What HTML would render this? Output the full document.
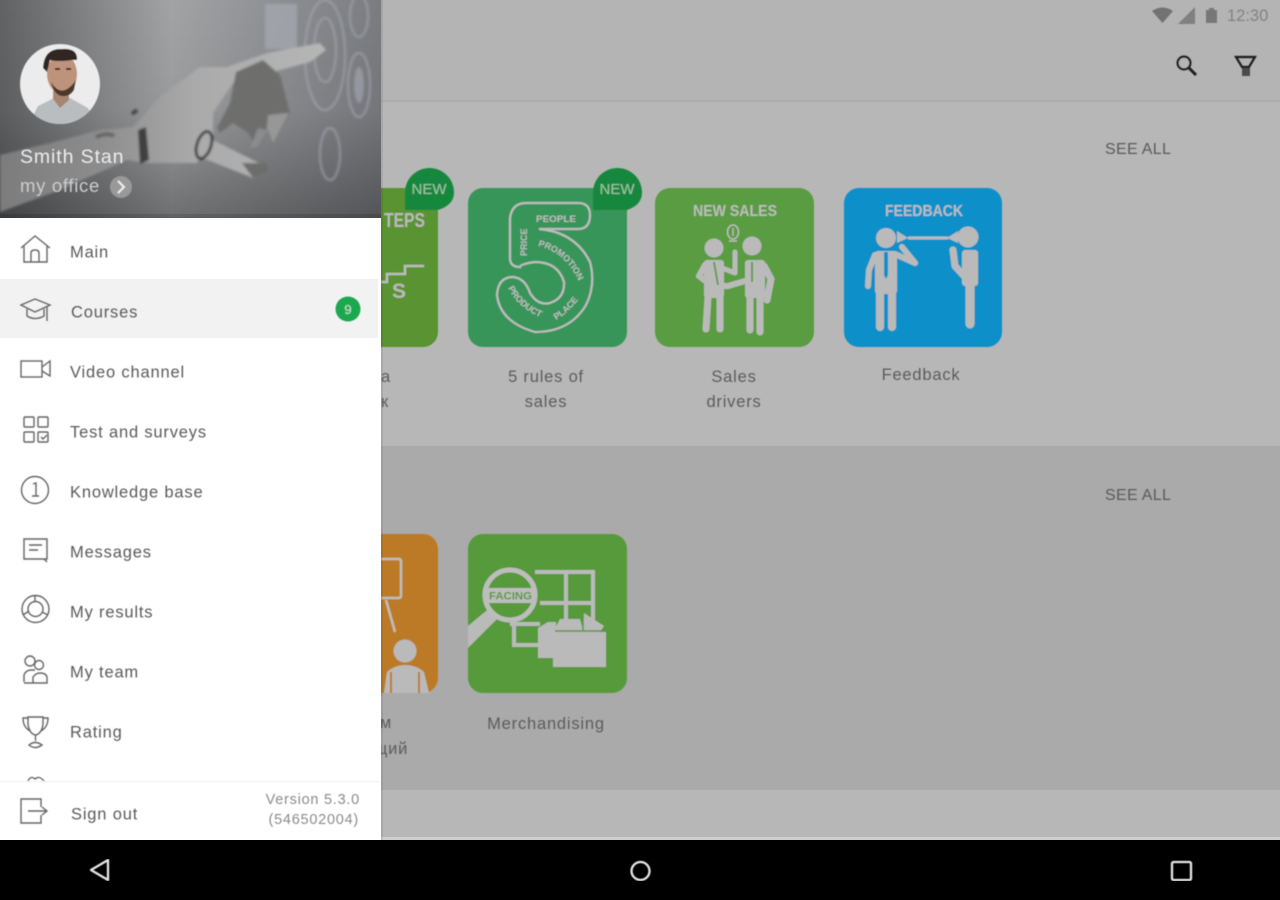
<!DOCTYPE html>
<html><head><meta charset="utf-8"><style>
html,body{margin:0;padding:0;width:1280px;height:900px;overflow:hidden;background:#000}
svg{display:block}
text{font-family:"Liberation Sans","Noto Sans CJK SC",sans-serif}
.m{font-size:16.5px;fill:#5a5a5a;letter-spacing:.82px}
.i{fill:none;stroke:#666;stroke-width:1.4}
.c{font-size:16.5px;fill:#5c5c5c;letter-spacing:.8px;text-anchor:middle}
.s{font-size:16px;fill:#5a5a5a;letter-spacing:.3px}
.w{fill:#bababa}
.l{fill:none;stroke:#bababa;stroke-linecap:round;stroke-linejoin:round}
.f{font-size:9px;font-weight:bold;fill:#bcbcbc}
</style></head><body>
<svg width="1280" height="900" viewBox="0 0 1280 900" xmlns="http://www.w3.org/2000/svg">
<defs>
<linearGradient id="hd" x1="0" y1="0" x2="1" y2="0"><stop offset="0" stop-color="#606264"/><stop offset=".45" stop-color="#a2a3a5"/><stop offset="1" stop-color="#7a7c80"/></linearGradient>
<linearGradient id="hv" x1="0" y1="0" x2="0" y2="1"><stop offset="0" stop-color="#000" stop-opacity="0"/><stop offset=".5" stop-color="#000" stop-opacity=".05"/><stop offset="1" stop-color="#000" stop-opacity=".32"/></linearGradient>
<linearGradient id="arm" x1="0" y1="0" x2="1" y2="0"><stop offset="0" stop-color="#7c7c7c"/><stop offset=".3" stop-color="#8c8c8c"/><stop offset=".6" stop-color="#aaaaaa"/><stop offset="1" stop-color="#b6b6b6"/></linearGradient>
<filter id="b1" x="-5%" y="-5%" width="110%" height="110%"><feGaussianBlur stdDeviation=".65"/></filter>
<filter id="b2" x="-5%" y="-5%" width="110%" height="110%"><feGaussianBlur stdDeviation="1.300"/></filter>
<clipPath id="av"><circle cx="60" cy="84" r="40"/></clipPath>
<clipPath id="hc"><rect width="381" height="218"/></clipPath>
<path id="p1" d="M538 246Q572 254 584 296"/>
<path id="p2" d="M508 288Q518 308 542 318"/>
<path id="p3" d="M556 320Q570 312 581 296"/>
</defs>

<!-- background -->
<rect width="1280" height="840" fill="#b7b7b7"/>
<rect y="0" width="1280" height="100" fill="#b4b4b4"/>
<rect y="100" width="1280" height="2" fill="#adadad"/>
<rect y="446" width="1280" height="344" fill="#aaaaaa"/>
<rect y="837" width="1280" height="3" fill="#cfcfcf"/>
<rect y="840" width="1280" height="60" fill="#000"/>

<g filter="url(#b1)">
<!-- status bar -->
<path d="M1152 11Q1162.500 4 1173 11L1162.500 23Z" fill="#727272"/>
<path d="M1195 7V24H1178Z" fill="#808080"/>
<path d="M1206 10H1209V8H1214V10H1217V23H1206Z" fill="#777"/>
<text x="1227" y="21" font-size="16.500" fill="#828282">12:30</text>

<!-- toolbar icons -->
<circle cx="1184" cy="63" r="6.500" fill="none" stroke="#1c1c1c" stroke-width="2"/>
<path d="M1189 68L1196 75" stroke="#1c1c1c" stroke-width="2.800"/>
<path d="M1236 57H1255L1249 67H1242Z" fill="none" stroke="#1c1c1c" stroke-width="2.200"/>
<path d="M1242 68H1250V76H1242Z" fill="#4c4c4c"/>

<text class="s" x="1105" y="154">SEE ALL</text>
<text class="s" x="1105" y="500">SEE ALL</text>

<!-- tile: steps (partly hidden) -->
<rect x="300" y="188" width="138" height="159" rx="15" fill="#5a9333"/>
<text x="425" y="227" font-size="20" font-weight="bold" fill="#b9b9b9" text-anchor="end" textLength="41" lengthAdjust="spacingAndGlyphs">TEPS</text>
<path d="M381 282H387V274H405V266H424" fill="none" stroke="#bcbcbc" stroke-width="2.500"/>
<text x="392" y="298" font-size="21" font-weight="bold" fill="#b9b9b9">S</text>
<path d="M405 210V192.500A24.500 24.500 0 0 1 454 192.500Q454 205 438 210Z" fill="#15883c"/>
<text x="429" y="194" font-size="15" fill="#9fc2a8" text-anchor="middle">NEW</text>
<text class="c" x="386" y="382">а</text>
<text class="c" x="385" y="407">к</text>

<!-- tile: 5 rules -->
<rect x="468" y="188" width="159" height="159" rx="15" fill="#38955a"/>
<path d="M526 203H578Q590 203 590 215Q590 229 578 229H539Q575 232 590 262Q596 285 586 305Q570 332 535 332Q500 322 497 295Q498 277 513 277Q525 278 530 293Q538 306 550 303Q565 298 564 282Q558 262 535 262Q520 264 520 267Q510 267 510 258V218Q512 203 526 203Z" fill="none" stroke="#bcbcbc" stroke-width="2.200"/>
<text x="536" y="222" font-size="9" font-weight="bold" fill="#bcbcbc" textLength="40" lengthAdjust="spacingAndGlyphs">PEOPLE</text>
<text class="f" transform="translate(527,256) rotate(-90)">PRICE</text>
<text class="f"><textPath href="#p1">PROMOTION</textPath></text>
<text class="f"><textPath href="#p2">PRODUCT</textPath></text>
<text class="f"><textPath href="#p3">PLACE</textPath></text>
<path d="M593 210V192.500A24.500 24.500 0 0 1 642 192.500Q642 205 627 210Z" fill="#15883c"/>
<text x="617" y="194" font-size="15" fill="#9fc2a8" text-anchor="middle">NEW</text>
<text class="c" x="546" y="382">5 rules of</text>
<text class="c" x="546" y="407">sales</text>

<!-- tile: sales drivers -->
<rect x="655" y="188" width="159" height="159" rx="15" fill="#5a9c42"/>
<text x="735" y="216" font-size="16" font-weight="bold" fill="#bcbcbc" text-anchor="middle" textLength="84" lengthAdjust="spacingAndGlyphs">NEW SALES</text>
<ellipse cx="733" cy="232" rx="5.500" ry="7" fill="none" stroke="#bcbcbc" stroke-width="1.500"/>
<path d="M733 228V236M729 241H737" stroke="#bcbcbc" stroke-width="1.500"/>
<circle cx="714" cy="248" r="9.500" class="w"/>
<circle cx="752" cy="246" r="9.500" class="w"/>
<rect x="704" y="260" width="20" height="38" rx="3" class="w"/>
<path class="l" stroke-width="7" d="M708 297L706 329M720 297L720 329"/>
<path class="l" stroke-width="6" d="M705 265L699 276L712 286L728 286L745 281"/>
<path class="l" stroke-width="5" d="M735 252V273L722 268"/>
<rect x="745" y="260" width="20" height="38" rx="3" class="w"/>
<path class="l" stroke-width="7" d="M750 298V330M760 298V332"/>
<path class="l" stroke-width="7" d="M764 266L771 279L767 300"/>
<path d="M752 262V282M714 262L718 285" stroke="#5a9c42" stroke-width="1.800"/>

<!-- tile: feedback -->
<rect x="844" y="188" width="158" height="159" rx="15" fill="#0a8fca"/>
<text x="924" y="216" font-size="16" font-weight="bold" fill="#bcbcbc" text-anchor="middle" textLength="78" lengthAdjust="spacingAndGlyphs">FEEDBACK</text>
<circle cx="886" cy="238" r="10" class="w"/>
<circle cx="968" cy="237" r="10.500" class="w"/>
<path d="M897 231L908 238L897 243ZM958 231L947 238L958 243Z" class="w"/>
<rect x="908" y="236.500" width="40" height="3" class="w"/>
<rect x="875" y="251" width="22" height="43" rx="3" class="w"/>
<path class="l" stroke-width="8" d="M880 293V327M892 293V327"/>
<path class="l" stroke-width="6" d="M875 255L869 270L868 286"/>
<path class="l" stroke-width="6" d="M895 254L915 263L902 247"/>
<path d="M884 252H888L888 275L886 279L884 275Z" fill="#0a8fca"/>
<rect x="962" y="250" width="16" height="36" rx="3" class="w"/>
<path class="l" stroke-width="9" d="M970 285V324"/>
<path class="l" stroke-width="7" d="M953 250L955 266L965 277"/>
<text class="c" x="921" y="380">Feedback</text>
<text class="c" x="734" y="382">Sales</text>
<text class="c" x="734" y="407">drivers</text>

<!-- tile: orange (partly hidden) -->
<rect x="300" y="534" width="138" height="159" rx="15" fill="#bd7a26"/>
<rect x="370" y="559" width="31" height="39" rx="2" fill="none" stroke="#bdbdbd" stroke-width="2.500"/>
<path d="M386 600L395 632" stroke="#bdbdbd" stroke-width="2.500"/>
<circle cx="405" cy="651" r="11.500" class="w"/>
<path d="M384 693L387 672Q395 665 405 665Q416 665 424 672L429 693Z" class="w"/>
<path d="M391 672V693M419 672V693" stroke="#bd7a26" stroke-width="2"/>
<text class="c" x="386" y="728">м</text>
<text class="c" x="391" y="754">щий</text>

<!-- tile: merchandising -->
<rect x="468" y="534" width="159" height="159" rx="15" fill="#569a3b"/>
<path d="M535 572H593V622M566 572V622M540 603H593" fill="none" stroke="#bababa" stroke-width="4"/>
<path d="M514 622V645H538M510 624H540" fill="none" stroke="#bababa" stroke-width="4"/>
<path d="M538 628L548 622H556V658H538Z" class="w"/>
<path d="M553 632L560 619H580L583 630L584 613L604 626L600 632H606V667H553Z" class="w"/>
<path d="M555 631H602M583 616V631" stroke="#569a3b" stroke-width="1.400"/>
<path d="M468 626L492 606L500 616L468 648Z" class="w"/>
<circle cx="510" cy="595" r="25" fill="#569a3b" stroke="#bdbdbd" stroke-width="5"/>
<rect x="486" y="588" width="49" height="15" fill="#bdbdbd"/>
<text x="510.500" y="599.500" font-size="11" font-weight="bold" fill="#569a3b" text-anchor="middle" textLength="43" lengthAdjust="spacingAndGlyphs">FACING</text>
<text class="c" x="546" y="729" letter-spacing="1.100">Merchandising</text>
</g>

<!-- drawer shadow -->
<rect x="381" y="0" width="2" height="840" fill="#000" opacity=".08"/>
<rect x="0" y="218" width="381" height="622" fill="#fff"/>

<!-- header -->
<g clip-path="url(#hc)">
<rect width="381" height="218" fill="url(#hd)"/>
<rect width="381" height="218" fill="url(#hv)"/>
<g filter="url(#b2)">
<rect x="265" y="4" width="32" height="45" fill="#a6a9b4" opacity=".7"/>
<g fill="none" stroke="#a6a9b6" stroke-width="2" opacity=".7">
<ellipse cx="325" cy="55" rx="20" ry="55"/><ellipse cx="325" cy="50" rx="11" ry="32"/>
<ellipse cx="359" cy="16" rx="9" ry="21"/><ellipse cx="359" cy="85" rx="11" ry="32"/>
<ellipse cx="330" cy="154" rx="10" ry="26"/>
</g>
<ellipse cx="359" cy="85" rx="5" ry="18" fill="#a6a9b6" opacity=".6"/>
<path d="M0 155L50 143L100 130L133 127L160 97L200 67L227 67L267 53L320 43L326 50L310 62L280 70L233 83L213 113L213 140L267 167L267 172L253 178L200 157L197 163L147 163L127 160L60 190L0 212Z" fill="url(#arm)" />
<path d="M236 72L263 60L280 75L290 113L273 143L267 127L257 147L248 133L233 123L220 133L217 128L230 103Z" fill="#6e6e6d"/>
<path d="M268 115L289 113L273 143L267 127Z" fill="#979797"/>
<path d="M250 148L258 128L267 130L257 147Z" fill="#8c8c8c"/>
<path d="M242 163L267 163L268 172L253 178Z" fill="#6d6d6c"/>
<path d="M138 130L146 127L149 160L140 164Z" fill="#3f3f3f"/>
<ellipse cx="204" cy="145" rx="7" ry="14" fill="none" stroke="#2f2f2f" stroke-width="2.800" transform="rotate(18 204 145)"/>
<path d="M96 137Q108 132 114 136" stroke="#666" stroke-width="4" fill="none"/>
<path d="M132 114L137 110" stroke="#444" stroke-width="4"/>
</g>
<rect y="214" width="381" height="4" fill="#000" opacity=".12"/>
</g>

<!-- avatar -->
<g filter="url(#b1)">
<circle cx="60" cy="84" r="40" fill="#ececec"/>
<g clip-path="url(#av)">
<path d="M28 125L38 106L54 98L70 98L88 108L96 125Z" fill="#b9bdc0"/>
<path d="M53 80H69V100L60 108L53 99Z" fill="#a98571"/>
<ellipse cx="62" cy="74" rx="15" ry="20" fill="#bd937b"/>
<path d="M51 82Q62 100 76 80L74 90Q70 97 62 96Q54 95 51 82Z" fill="#4d382c"/>
<path d="M43 68Q44 48 62 49Q78 48 77 60L72 60Q58 62 50 60L47 72Z" fill="#312823"/>
<path d="M55 69H60M66 69H71" stroke="#3a2c24" stroke-width="2"/>
</g>
<text x="20" y="163" font-size="19.500" fill="#eeeeee" letter-spacing=".9">Smith Stan</text>
<text x="20" y="192" font-size="18.500" fill="#cdcdcd" letter-spacing=".7">my office</text>
<circle cx="121" cy="187" r="11" fill="#999"/>
<path d="M118 181L124 187L118 193" fill="none" stroke="#eee" stroke-width="2"/>
</g>

<!-- menu -->
<rect x="0" y="279" width="378" height="59" fill="#f2f2f2"/>
<g filter="url(#b1)">
<text class="m" x="70" y="257.500">Main</text>
<text class="m" x="71" y="317.500">Courses</text>
<text class="m" x="70" y="377.500">Video channel</text>
<text class="m" x="70" y="437.500">Test and surveys</text>
<text class="m" x="70" y="497.500">Knowledge base</text>
<text class="m" x="70" y="557.500">Messages</text>
<text class="m" x="70" y="617.500">My results</text>
<text class="m" x="70" y="677.500">My team</text>
<text class="m" x="70" y="737.500">Rating</text>
<text class="m" x="71" y="819.500">Sign out</text>
<text x="360" y="804" font-size="14.500" fill="#8a8a8a" text-anchor="end" letter-spacing=".75">Version 5.3.0</text>
<text x="359" y="824" font-size="14.500" fill="#8a8a8a" text-anchor="end" letter-spacing=".75">(546502004)</text>

<circle cx="348" cy="309" r="12.500" fill="#1ba84f"/>
<text x="348" y="314" font-size="13" fill="#bfe6cc" text-anchor="middle">9</text>

<!-- icons -->
<path class="i" d="M21 248L35 236L50 248M24 246V262H47V246M31 262V253Q31 250 35 250Q39 250 39 253V262"/>
<path class="i" d="M21 305L35 299L50 305L35 312ZM27 309V316Q35 321 44 316V309M47 306V321"/>
<rect class="i" x="21" y="361" width="21" height="16"/>
<path class="i" d="M42 367L50 361V376L42 371"/>
<rect class="i" x="24" y="417" width="10" height="10" rx="1"/><rect class="i" x="38" y="417" width="10" height="10" rx="1"/>
<rect class="i" x="24" y="432" width="10" height="10" rx="1"/><rect class="i" x="38" y="432" width="10" height="10" rx="1"/>
<path class="i" d="M41 437L43 439L47 435"/>
<circle class="i" cx="35" cy="490" r="13.500"/>
<path class="i" d="M33 484L36 483V496M32 496H39"/>
<path class="i" d="M24 539H47V559H24ZM29 545H42M29 550H38M44 559L47 562"/>
<circle class="i" cx="35.500" cy="609" r="13.500"/><circle class="i" cx="35.500" cy="609" r="7.500"/>
<path class="i" d="M35 596V602M23 615L29 611M48 615L42 612"/>
<circle class="i" cx="30" cy="661" r="5"/><circle class="i" cx="39" cy="665" r="4.500"/>
<path class="i" d="M24 682V675Q26 670 31 670H35M33 683V677Q36 673 40 673Q46 673 47 677V683H24"/>
<path class="i" d="M28 717H43V724Q42 733 36 735H35Q29 733 28 724ZM28 718H23Q23 727 30 731M43 718H48Q48 727 41 731M35.500 735V741M29 745Q35 740 42 745Q35 750 29 745Z"/>
<path class="i" d="M28 781Q31 775 35 779Q39 775 44 781"/>
<rect x="0" y="781" width="381" height="1" fill="#eeeeee"/>
<path class="i" d="M41 807V799H21V823H41V815M28 811H46M42 807L47 811L42 815"/>
</g>

<!-- nav bar -->
<g filter="url(#b1)">
<path d="M108 860V880L91 870Z" fill="none" stroke="#e6e6e6" stroke-width="2.300" stroke-linejoin="round"/>
<circle cx="640.500" cy="871" r="9" fill="none" stroke="#e6e6e6" stroke-width="2.300"/>
<rect x="1172" y="862" width="19" height="18" rx="1.500" fill="none" stroke="#e6e6e6" stroke-width="2.300"/>
</g>
</svg>
</body></html>
